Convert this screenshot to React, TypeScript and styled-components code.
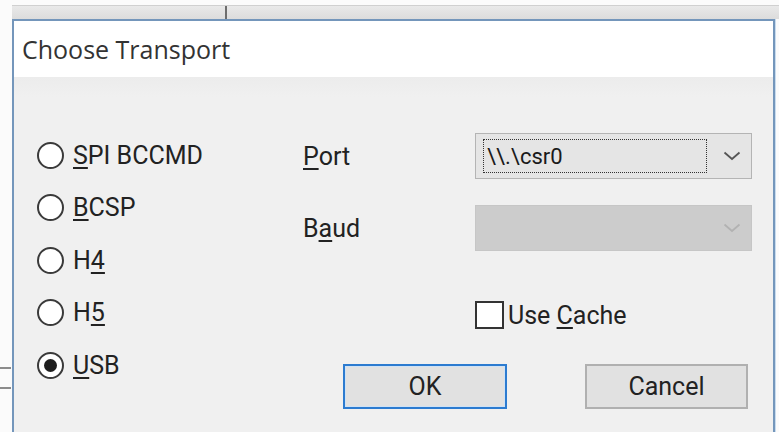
import React, { useState } from 'react';
import styled, { createGlobalStyle } from 'styled-components';

const GlobalStyle = createGlobalStyle`
  html, body {
    margin: 0;
    padding: 0;
    background: #fbfbfb;
  }
  #root {
    height: 432px;
    overflow: hidden;
  }
`;

const transports = [
  { id: 'spi', before: '', key: 'S', after: 'PI BCCMD' },
  { id: 'bcsp', before: '', key: 'B', after: 'CSP' },
  { id: 'h4', before: 'H', key: '4', after: '' },
  { id: 'h5', before: 'H', key: '5', after: '' },
  { id: 'usb', before: '', key: 'U', after: 'SB' },
];

const Chevron = ({ color }: { color: string }) => (
  <svg width="18" height="10" viewBox="0 0 18 10">
    <path d="M1.5 1.5 L9 8 L16.5 1.5" fill="none" stroke={color} strokeWidth="1.8" />
  </svg>
);

const App = () => {
  const [selected, setSelected] = useState('usb');
  const [useCache, setUseCache] = useState(false);

  return (
    <>
      <GlobalStyle />
      <Page>
        <Corner />
        <BackStrip>
          <BackDivider />
        </BackStrip>
        <Gutter>
          <Tick />
          <Tick />
        </Gutter>
        <Dialog>
          <TitleBar>Choose Transport</TitleBar>
          <Body>
            <RadioColumn>
              {transports.map((t) => (
                <RadioRow key={t.id} onClick={() => setSelected(t.id)}>
                  <RadioCircle $checked={selected === t.id} />
                  <Label>
                    {t.before}
                    <u>{t.key}</u>
                    {t.after}
                  </Label>
                </RadioRow>
              ))}
            </RadioColumn>

            <RightPanel>
              <FormGrid>
                <Label>
                  <u>P</u>ort
                </Label>
                <Combo>
                  <FocusRect>\\.\csr0</FocusRect>
                  <Chevron color="#555" />
                </Combo>
                <Label>
                  B<u>a</u>ud
                </Label>
                <Combo $disabled>
                  <span />
                  <Chevron color="#b2b2b2" />
                </Combo>
              </FormGrid>

              <CheckRow onClick={() => setUseCache(!useCache)}>
                <CheckBox>{useCache ? '✓' : ''}</CheckBox>
                <Label>
                  Use <u>C</u>ache
                </Label>
              </CheckRow>

              <ButtonRow>
                <Button $primary>OK</Button>
                <Button>Cancel</Button>
              </ButtonRow>
            </RightPanel>
          </Body>
        </Dialog>
      </Page>
    </>
  );
};

const Page = styled.div`
  display: grid;
  grid-template-columns: 12px 763px 1fr;
  grid-template-rows: 19px 413px;
  height: 432px;
  font-family: Roboto, 'Liberation Sans', sans-serif;
  color: #222;
`;

const Corner = styled.div``;

const BackStrip = styled.div`
  grid-column: 2 / 4;
  margin-top: 5px;
  background: linear-gradient(#e9e9e9, #dcdcdc);
  border-top: 1px solid #d0d0d0;
`;

const BackDivider = styled.div`
  margin-left: 213px;
  width: 2px;
  height: 100%;
  background: #6d6d6d;
`;

const Gutter = styled.div`
  display: flex;
  flex-direction: column;
  gap: 18px;
  padding-top: 348px;
`;

const Tick = styled.div`
  width: 11px;
  height: 2px;
  background: #8c8c8c;
`;

const Dialog = styled.div`
  display: flex;
  flex-direction: column;
  border: 2px solid #7496bb;
  border-bottom: none;
  box-shadow: 1px 0 0 #c9dcee;
  background: #f0f0f0;
`;

const TitleBar = styled.div`
  height: 56px;
  display: flex;
  align-items: center;
  padding-left: 8px;
  background: #fff;
  font-family: 'Open Sans', 'Noto Sans', sans-serif;
  font-size: 25px;
  color: #333;
`;

const Body = styled.div`
  flex: 1;
  display: flex;
  padding-left: 23px;
  background: linear-gradient(#ececec, #f0f0f0 20px);
`;

const RadioColumn = styled.div`
  width: 266px;
  padding-top: 52px;
  display: flex;
  flex-direction: column;
`;

const RadioRow = styled.div`
  height: 52.5px;
  display: flex;
  align-items: center;
  gap: 9px;
  cursor: default;
`;

const RadioCircle = styled.span<{ $checked?: boolean }>`
  width: 27px;
  height: 27px;
  box-sizing: border-box;
  border-radius: 50%;
  border: 2px solid #3a3a3a;
  background: #fff;
  display: flex;
  align-items: center;
  justify-content: center;

  &::after {
    content: '';
    display: ${(p) => (p.$checked ? 'block' : 'none')};
    width: 13px;
    height: 13px;
    border-radius: 50%;
    background: #1e1e1e;
  }
`;

const Label = styled.span`
  font-size: 25px;
  line-height: 1;
  color: #222;
  white-space: nowrap;

  u {
    text-decoration-thickness: 2px;
    text-underline-offset: 3px;
  }
`;

const RightPanel = styled.div`
  display: flex;
  flex-direction: column;
  padding-top: 56px;
`;

const FormGrid = styled.div`
  display: grid;
  grid-template-columns: 172px 277px;
  row-gap: 26px;
  align-items: center;
`;

const Combo = styled.div<{ $disabled?: boolean }>`
  height: 46px;
  box-sizing: border-box;
  display: flex;
  align-items: center;
  justify-content: space-between;
  padding: 0 10px 0 7px;
  background: ${(p) => (p.$disabled ? '#cccccc' : '#e5e5e5')};
  border: 1px solid ${(p) => (p.$disabled ? '#c6c6c6' : '#b4b4b4')};
`;

const FocusRect = styled.span`
  width: 224px;
  height: 34px;
  box-sizing: border-box;
  display: flex;
  align-items: center;
  padding-left: 3px;
  border: 1px dotted #333;
  font-size: 22px;
  color: #1a1a1a;
`;

const CheckRow = styled.div`
  margin-top: 50px;
  margin-left: 172px;
  display: flex;
  align-items: center;
  gap: 4px;
  cursor: default;
`;

const CheckBox = styled.span`
  width: 29px;
  height: 28px;
  box-sizing: border-box;
  border: 2px solid #333;
  background: #fff;
  display: flex;
  align-items: center;
  justify-content: center;
  font-size: 20px;
`;

const ButtonRow = styled.div`
  margin-top: 35px;
  padding-left: 40px;
  display: flex;
  gap: 78px;
`;

const Button = styled.button<{ $primary?: boolean }>`
  width: ${(p) => (p.$primary ? '164px' : '163px')};
  height: 45px;
  box-sizing: border-box;
  padding: 0;
  font-family: Roboto, 'Liberation Sans', sans-serif;
  font-size: 25px;
  color: #222;
  background: #e1e1e1;
  border: 2px solid ${(p) => (p.$primary ? '#2c7bd0' : '#b0b0b0')};
  box-shadow: ${(p) => (p.$primary ? 'inset 0 0 0 1px #cfe2f5' : 'none')};
`;

export default App;
